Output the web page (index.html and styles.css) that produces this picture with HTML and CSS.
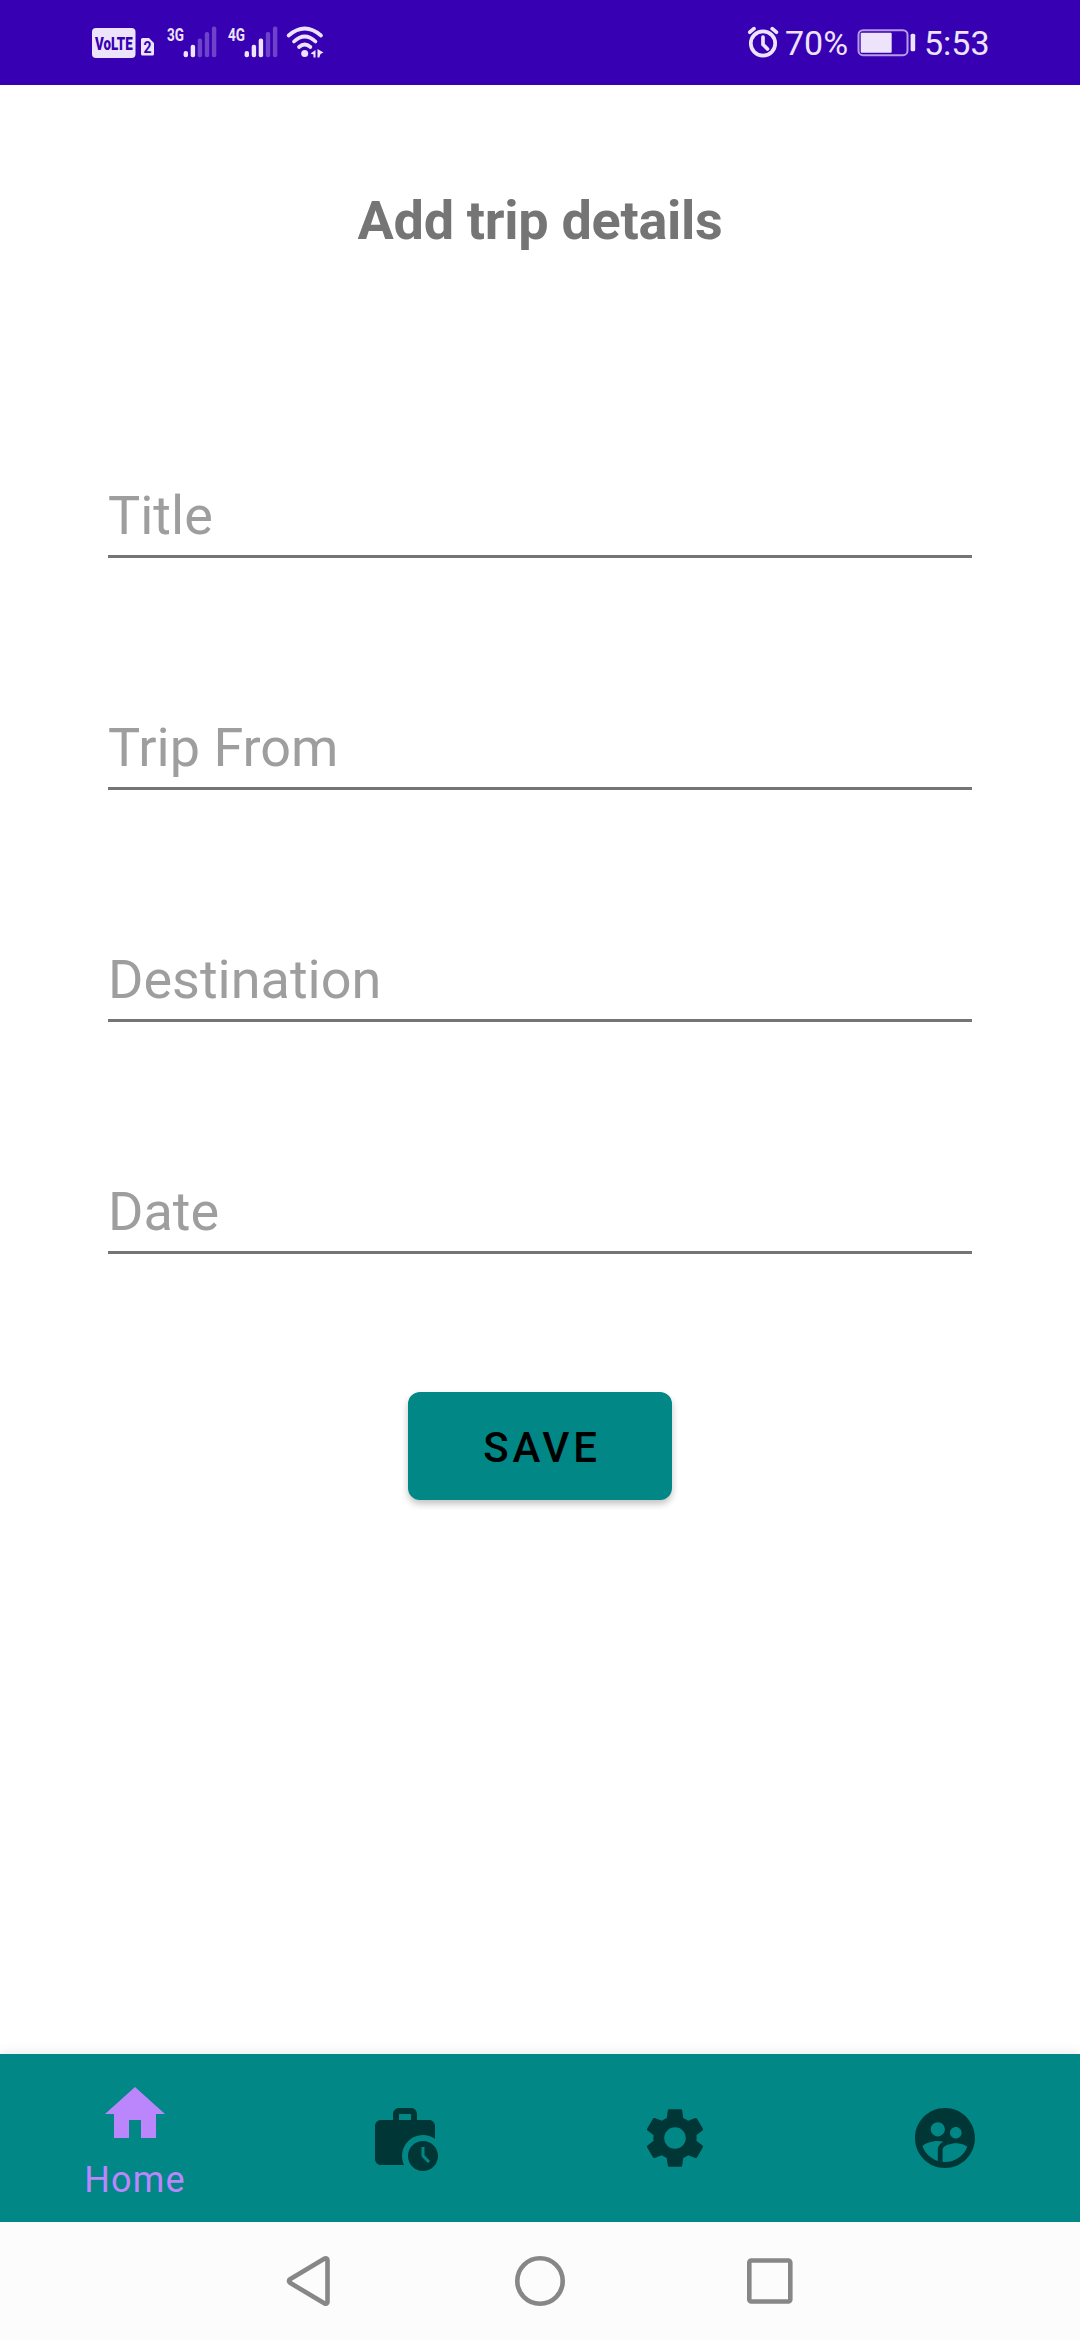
FILE: index.html
```html
<!DOCTYPE html>
<html lang="en">
<head>
<meta charset="utf-8">
<title>Add trip details</title>
<link rel="stylesheet" href="styles.css">
</head>
<body>
<div class="screen">
  <header class="status-bar">
    <div class="status-group status-left">
      <svg class="volte" width="64" height="34" viewBox="0 0 64 34">
        <rect class="fill" x="0" y="2" width="43.5" height="30" rx="4"/>
        <text class="badge-text" transform="translate(3 23.6) scale(0.92 1.4)" font-size="13" textLength="41" lengthAdjust="spacingAndGlyphs">VoLTE</text>
        <path class="fill" d="M50.5 12h6.5l5 5v11a1.5 1.5 0 0 1-1.5 1.5h-10A1.5 1.5 0 0 1 49 28V13.5A1.5 1.5 0 0 1 50.5 12z"/>
        <text class="badge-text thin" x="51.4" y="27" font-size="16" textLength="8" lengthAdjust="spacingAndGlyphs">2</text>
      </svg>
      <svg class="signal" width="52" height="34" viewBox="0 0 52 34">
        <text class="net-text" x="1" y="14.5" font-size="18.5" textLength="17" lengthAdjust="spacingAndGlyphs">3G</text>
        <rect class="fill" x="17.6" y="25" width="4.4" height="6.2" rx="2"/>
        <rect class="fill" x="24.7" y="18.7" width="4.4" height="12.5" rx="2"/>
        <rect class="dim" x="31.7" y="12.5" width="4.4" height="18.7" rx="2"/>
        <rect class="dim" x="38.8" y="6" width="4.4" height="25.2" rx="2"/>
        <rect class="dim" x="45.9" y="0.5" width="4.4" height="30.7" rx="2"/>
      </svg>
      <svg class="signal" width="52" height="34" viewBox="0 0 52 34">
        <text class="net-text" x="1" y="14.5" font-size="18.5" textLength="17" lengthAdjust="spacingAndGlyphs">4G</text>
        <rect class="fill" x="17.6" y="25" width="4.4" height="6.2" rx="2"/>
        <rect class="fill" x="24.7" y="18.7" width="4.4" height="12.5" rx="2"/>
        <rect class="fill" x="31.7" y="12.5" width="4.4" height="18.7" rx="2"/>
        <rect class="dim" x="38.8" y="6" width="4.4" height="25.2" rx="2"/>
        <rect class="dim" x="45.9" y="0.5" width="4.4" height="30.7" rx="2"/>
      </svg>
      <svg class="wifi" width="40" height="34" viewBox="0 0 40 34">
        <path class="line" d="M3.6 9.5Q19.700-4.500 36 9.500M9 15.500Q19.700 5.500 30.500 15.500M14 21Q19.700 16 25.400 21"/>
        <circle class="fill" cx="19.7" cy="27.5" r="3.5"/>
        <path class="fill" d="M25.500 27.500l5-3.500v7.500h-2v-3zM32.500 23l6 3.500-3 1.500-1.200 3.500h-1.800z"/>
      </svg>
    </div>
    <div class="status-group status-right">
      <svg class="alarm" width="32" height="34" viewBox="0 0 32 34">
        <circle class="line" cx="16" cy="17.500" r="12.200"/>
        <path class="line" d="M16 11v7.500l4.500 4.500M2.800 6.200l4.200-3.600M29.400 6.200l-4.200-3.600"/>
      </svg>
      <span class="status-text percent">70%</span>
      <svg class="battery" width="60" height="34" viewBox="0 0 60 34">
        <rect class="frame" x="1.500" y="4.200" width="49" height="25" rx="4.500"/>
        <rect class="fill" x="3.700" y="6.700" width="31" height="20" rx="1"/>
        <rect class="fill" x="53.600" y="7.800" width="4.600" height="17.400" rx="1.500"/>
      </svg>
      <span class="status-text clock">5:53</span>
    </div>
  </header>

  <main class="content">
    <h1 class="title">Add trip details</h1>
    <form class="trip-form">
      <input class="field" type="text" placeholder="Title" aria-label="Title">
      <input class="field" type="text" placeholder="Trip From" aria-label="Trip From">
      <input class="field" type="text" placeholder="Destination" aria-label="Destination">
      <input class="field" type="text" placeholder="Date" aria-label="Date">
      <button class="save" type="button">SAVE</button>
    </form>
  </main>

  <nav class="tabs">
    <a class="tab active">
      <svg class="tab-icon" viewBox="0 0 24 24"><path d="M10 20v-6h4v6h5v-8h3L12 3 2 12h3v8z"/></svg>
      <span class="tab-label">Home</span>
    </a>
    <a class="tab">
      <svg class="tab-icon" viewBox="0 0 24 24"><path fill-rule="evenodd" d="M18 11c1.490 0 2.870.470 4 1.260V8c0-1.110-.890-2-2-2h-4V4c0-1.110-.890-2-2-2h-4c-1.110 0-2 .890-2 2v2H4c-1.110 0-2 .890-2 2v11c0 1.110.890 2 2 2h7.680A7 7 0 0 1 18 11zM10 4h4v2h-4z"/><path fill-rule="evenodd" d="M18 13c-2.760 0-5 2.240-5 5s2.240 5 5 5 5-2.240 5-5-2.240-5-5-5zm1.650 7.350L17.500 18.200V15h1v2.790l1.850 1.850z"/></svg>
    </a>
    <a class="tab">
      <svg class="tab-icon" viewBox="0 0 24 24"><path d="M19.14,12.94c0.04-0.3,0.06-0.61,0.06-0.94c0-0.32-0.02-0.64-0.07-0.94l2.03-1.58c0.18-0.14,0.23-0.41,0.12-0.61l-1.92-3.32c-0.12-0.22-0.37-0.29-0.59-0.22l-2.39,0.96c-0.5-0.38-1.03-0.7-1.62-0.94L14.4,2.81c-0.04-0.24-0.24-0.41-0.48-0.41h-3.84c-0.24,0-0.43,0.17-0.47,0.41L9.25,5.35C8.66,5.59,8.12,5.92,7.63,6.29L5.24,5.33c-0.22-0.08-0.47,0-0.59,0.22L2.74,8.87C2.62,9.08,2.66,9.34,2.86,9.48l2.03,1.58C4.84,11.36,4.8,11.69,4.8,12s0.02,0.64,0.07,0.94l-2.03,1.58c-0.18,0.14-0.23,0.41-0.12,0.61l1.92,3.32c0.12,0.22,0.37,0.29,0.59,0.22l2.39-0.96c0.5,0.38,1.03,0.7,1.62,0.94l0.36,2.54c0.05,0.24,0.24,0.41,0.48,0.41h3.84c0.24,0,0.44-0.17,0.47-0.41l0.36-2.54c0.59-0.24,1.13-0.56,1.62-0.94l2.39,0.96c0.22,0.08,0.47,0,0.59-0.22l1.92-3.32c0.12-0.22,0.07-0.47-0.12-0.61L19.14,12.94z M12,15.6c-1.98,0-3.6-1.62-3.6-3.6s1.62-3.6,3.6-3.6s3.6,1.62,3.6,3.6S13.98,15.6,12,15.6z"/></svg>
    </a>
    <a class="tab">
      <svg class="tab-icon" viewBox="0 0 24 24"><path d="M11.99 2c-5.520 0-10 4.480-10 10s4.480 10 10 10 10-4.480 10-10-4.480-10-10-10zm3.610 6.340c1.070 0 1.930.860 1.930 1.930 0 1.070-.860 1.930-1.930 1.930-1.070 0-1.930-.860-1.930-1.930-.010-1.070.860-1.930 1.930-1.930zm-6-1.580c1.300 0 2.360 1.060 2.360 2.360 0 1.300-1.060 2.360-2.360 2.360s-2.360-1.060-2.360-2.360c0-1.310 1.050-2.360 2.360-2.360zm0 9.130v3.750c-2.400-.750-4.300-2.600-5.140-4.960 1.050-1.120 3.670-1.690 5.140-1.690.530 0 1.200.080 1.900.220-1.640.870-1.900 2.020-1.900 2.680zM11.990 20c-.270 0-.530-.010-.790-.040v-4.070c0-1.420 2.940-2.130 4.400-2.130 1.070 0 2.920.390 3.840 1.150-1.170 2.970-4.060 5.090-7.450 5.090z"/></svg>
    </a>
  </nav>

  <footer class="system-nav">
    <svg class="system-icon" viewBox="0 0 56 56"><path d="M8 26.200L42.700 5.500a1.900 1.900 0 0 1 2.800 1.700v41.600a1.900 1.900 0 0 1-2.800 1.700L8 29.800a2.100 2.100 0 0 1 0-3.600z"/></svg>
    <svg class="system-icon" viewBox="0 0 56 56"><circle cx="28" cy="28" r="22.700"/></svg>
    <svg class="system-icon" viewBox="0 0 56 56"><rect x="7.300" y="7.500" width="41" height="41" rx="2"/></svg>
  </footer>
</div>
</body>
</html>
```
FILE: styles.css
```css
* {
  box-sizing: border-box;
}

body {
  margin: 0;
  font-family: Roboto, "Liberation Sans", sans-serif;
  background: #fff;
}

.screen {
  display: flex;
  flex-direction: column;
  width: 1080px;
  height: 2340px;
  overflow: hidden;
}

.status-bar {
  display: flex;
  justify-content: space-between;
  align-items: flex-start;
  height: 85px;
  padding: 26px 93px 0 92px;
  background: #3700b3;
  color: #ede3fa;
}

.status-group {
  display: flex;
  height: 34px;
}

.status-bar svg {
  display: block;
  flex: none;
  overflow: visible;
}

.signal {
  margin-left: 10px;
}

.signal + .signal {
  margin-left: 9px;
}

.wifi {
  margin-left: 6px;
}

.fill {
  fill: #ede3fa;
}

.dim {
  fill: #6e42cb;
}

.line {
  fill: none;
  stroke: #ede3fa;
  stroke-width: 3.7;
  stroke-linecap: round;
}

.frame {
  fill: none;
  stroke: #b79be6;
  stroke-width: 2;
}

.badge-text {
  font-weight: 900;
  fill: #3700b3;
}

.badge-text.thin {
  font-weight: 700;
}

.net-text {
  font-weight: 700;
  fill: #ede3fa;
}

.status-text {
  font-size: 34px;
  line-height: 34px;
  white-space: nowrap;
}

.percent {
  width: 78px;
  padding-left: 6px;
}

.clock {
  width: 70px;
  padding-left: 7px;
}

.content {
  display: flex;
  flex: 1;
  flex-direction: column;
  align-items: center;
}

.title {
  margin: 104px 0 0;
  font-size: 54px;
  font-weight: 700;
  line-height: 64px;
  letter-spacing: -0.3px;
  color: #757575;
}

.trip-form {
  display: flex;
  flex-direction: column;
  align-items: center;
  gap: 138px;
  width: 864px;
  margin-top: 211px;
}

.field {
  width: 100%;
  height: 94px;
  padding: 11px 0 0;
  border: 0;
  border-bottom: 3px solid #757575;
  outline: 0;
  background: transparent;
  font-family: inherit;
  font-size: 54px;
  color: #212121;
}

.field::placeholder {
  color: #9e9e9e;
  opacity: 1;
}

.save {
  width: 264px;
  height: 108px;
  padding: 2px 0 0 4px;
  border: 0;
  border-radius: 12px;
  background: #018786;
  box-shadow: 0 4px 7px rgba(0, 0, 0, 0.24);
  font-family: inherit;
  font-size: 42px;
  font-weight: 500;
  letter-spacing: 3.75px;
  color: #000;
}

.tabs {
  display: grid;
  grid-template-columns: repeat(4, 1fr);
  height: 168px;
  background: #018786;
  box-shadow: 0 0 12px rgba(0, 0, 0, 0.1);
}

.tab {
  display: flex;
  flex-direction: column;
  align-items: center;
  justify-content: center;
  color: #003636;
}

.tab.active {
  justify-content: flex-start;
  padding-top: 24px;
  color: #bb86fc;
}

.tab-icon {
  display: block;
  width: 72px;
  height: 72px;
  fill: currentColor;
}

.tab-label {
  margin-top: 9px;
  font-size: 36px;
  line-height: 42px;
  letter-spacing: 1.2px;
}

.system-nav {
  position: relative;
  display: flex;
  justify-content: center;
  gap: 174px;
  height: 118px;
  padding-top: 31px;
  background: #fcfcfc;
}

.system-icon {
  width: 56px;
  height: 56px;
  fill: none;
  stroke: #878787;
  stroke-width: 4.6;
  stroke-linejoin: round;
}
```
